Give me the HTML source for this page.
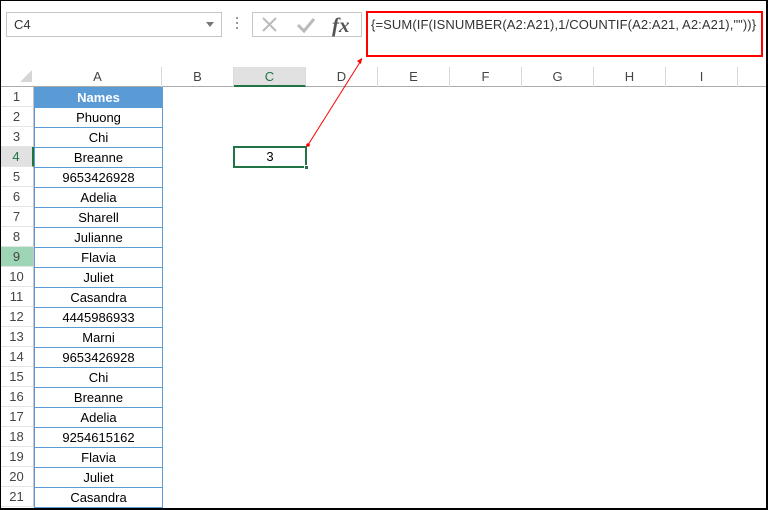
<!DOCTYPE html>
<html><head><style>
*{margin:0;padding:0;box-sizing:border-box}
body{width:768px;height:510px;overflow:hidden;background:#fff;font-family:"Liberation Sans",sans-serif;position:relative}
.frame{position:absolute;left:0;top:0;width:768px;height:510px;border:1px solid #000;border-bottom:2px solid #000;border-right:2px solid #000;z-index:10;pointer-events:none}
.abs{position:absolute}
.colh{position:absolute;top:67px;height:20px;font-size:13px;color:#444;text-align:center;line-height:19px;border-right:1px solid #dadada}
.rowh{position:absolute;left:0;width:34px;height:20px;font-size:13px;color:#444;text-align:center;line-height:20px;border-bottom:1px solid #e4e4e4;border-right:1px solid #c6c6c6}
.cell{position:absolute;left:34px;width:129px;height:21px;border:1px solid #5b9bd5;font-size:13px;text-align:center;line-height:19px;color:#000}
</style></head><body>
<div class="frame"></div>
<div class="abs" style="left:6px;top:12px;width:216px;height:25px;border:1px solid #c6c6c6;font-size:13px;line-height:23px;padding-left:7px;color:#333">C4</div>
<div class="abs" style="left:206px;top:22px;width:0;height:0;border-left:4px solid transparent;border-right:4px solid transparent;border-top:5px solid #777"></div>
<div class="abs" style="left:236px;top:17px;width:2px;height:2px;background:#999;box-shadow:0 5px 0 #999,0 10px 0 #999"></div>
<div class="abs" style="left:252px;top:12px;width:110px;height:25px;border:1px solid #c6c6c6"></div>
<svg class="abs" style="left:252px;top:12px" width="110" height="25">
<path d="M11 6 L24 19 M24 6 L11 19" stroke="#bbb" stroke-width="2" fill="none"/>
<path d="M46 13 L52 19 L62 7" stroke="#bbb" stroke-width="3" fill="none"/>
<text x="80" y="20" font-family="Liberation Serif,serif" font-style="italic" font-weight="bold" font-size="21" fill="#555">fx</text>
</svg>
<div class="abs" style="left:366px;top:11px;width:397px;height:46px;border:2px solid #f00"></div>
<div class="abs" style="left:371px;top:17px;font-size:13px;color:#333;white-space:nowrap;letter-spacing:0.1px">{=SUM(IF(ISNUMBER(A2:A21),1/COUNTIF(A2:A21, A2:A21),""))}</div>
<div class="abs" style="left:0;top:86px;width:768px;height:1px;background:#ababab"></div>
<div class="abs" style="left:20px;top:70px;width:0;height:0;border-left:12px solid transparent;border-bottom:12px solid #d6d6d6"></div>
<div class="colh" style="left:34px;width:128px">A</div>
<div class="colh" style="left:162px;width:72px">B</div>
<div class="colh" style="left:234px;width:72px;background:#e1e1e1;color:#217346;border-bottom:2px solid #217346;height:20px">C</div>
<div class="colh" style="left:306px;width:72px">D</div>
<div class="colh" style="left:378px;width:72px">E</div>
<div class="colh" style="left:450px;width:72px">F</div>
<div class="colh" style="left:522px;width:72px">G</div>
<div class="colh" style="left:594px;width:72px">H</div>
<div class="colh" style="left:666px;width:72px">I</div>
<div id="rows"></div>
<div class="cell" style="top:87px;background:#5b9bd5;color:#fff;font-weight:bold">Names</div>
<div class="abs" style="left:233px;top:146px;width:74px;height:22px;border:2px solid #217346;font-size:13px;text-align:center;line-height:18px">3</div>
<div class="abs" style="left:304px;top:165px;width:5px;height:5px;background:#217346;border:1px solid #fff"></div>
<svg class="abs" style="left:0;top:0" width="768" height="510">
<line x1="308" y1="145" x2="362" y2="59" stroke="#f00" stroke-width="1"/>
<circle cx="308" cy="145" r="1.8" fill="#f00"/>
<path d="M362 58 L357 61 L361 64 Z" fill="#f00"/>
</svg>
<script>
var names=["Phuong","Chi","Breanne","9653426928","Adelia","Sharell","Julianne","Flavia","Juliet","Casandra","4445986933","Marni","9653426928","Chi","Breanne","Adelia","9254615162","Flavia","Juliet","Casandra"];
var h="";
for(var i=1;i<=21;i++){var t=87+(i-1)*20;var st="";
if(i==4)st="background:#e1e1e1;color:#217346;border-right:2px solid #217346;";
if(i==9)st="background:#9fd5b7;";
h+='<div class="rowh" style="top:'+t+'px;'+st+'">'+i+'</div>';
if(i>1)h+='<div class="cell" style="top:'+t+'px">'+names[i-2]+'</div>';}
document.getElementById("rows").innerHTML=h;
</script>
</body></html>
